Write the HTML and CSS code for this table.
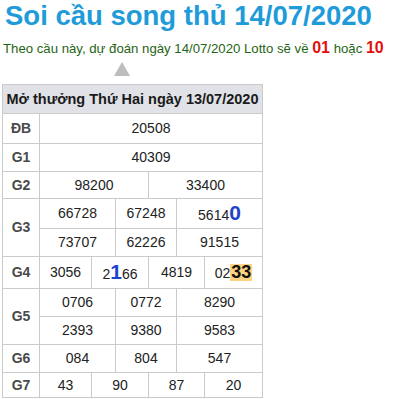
FILE: index.html
```html
<!DOCTYPE html>
<html lang="vi">
<head>
<meta charset="utf-8">
<title>Soi cầu song thủ 14/07/2020</title>
<link rel="stylesheet" href="styles.css">
</head>
<body>
<div class="page">
  <h1 class="title">Soi cầu song thủ 14/07/2020</h1>
  <p class="lead">Theo cầu này, dự đoán ngày 14/07/2020 Lotto sẽ về <b class="hit">01</b> hoặc <b class="hit">10</b></p>
  <div class="arrow"></div>
  <div class="board">
    <div class="head">Mở thưởng Thứ Hai ngày 13/07/2020</div>

    <div class="lbl">ĐB</div>
    <div class="cell c-all">20508</div>

    <div class="lbl">G1</div>
    <div class="cell c-all">40309</div>

    <div class="lbl">G2</div>
    <div class="cell c2-4">98200</div>
    <div class="cell c5-7">33400</div>

    <div class="lbl tall">G3</div>
    <div class="cell c2-3">66728</div>
    <div class="cell c4-5">67248</div>
    <div class="cell c6-7"><span>5614<b class="mark">0</b></span></div>
    <div class="cell c2-3">73707</div>
    <div class="cell c4-5">62226</div>
    <div class="cell c6-7">91515</div>

    <div class="lbl">G4</div>
    <div class="cell c2">3056</div>
    <div class="cell c3-4"><span>2<b class="mark">1</b>66</span></div>
    <div class="cell c5-6">4819</div>
    <div class="cell c7"><span>02<b class="hl">33</b></span></div>

    <div class="lbl tall">G5</div>
    <div class="cell c2-3">0706</div>
    <div class="cell c4-5">0772</div>
    <div class="cell c6-7">8290</div>
    <div class="cell c2-3">2393</div>
    <div class="cell c4-5">9380</div>
    <div class="cell c6-7">9583</div>

    <div class="lbl">G6</div>
    <div class="cell c2-3">084</div>
    <div class="cell c4-5">804</div>
    <div class="cell c6-7">547</div>

    <div class="lbl">G7</div>
    <div class="cell c2">43</div>
    <div class="cell c3-4">90</div>
    <div class="cell c5-6">87</div>
    <div class="cell c7">20</div>
  </div>
</div>
</body>
</html>
```
FILE: styles.css
```css
body {
  margin: 0;
  background: #fff;
  font-family: "Liberation Sans", Arial, sans-serif;
}

.page {
  padding: 0 2px;
}

.title {
  margin: 0;
  padding-left: 3px;
  font-size: 27.5px;
  line-height: 31px;
  font-weight: bold;
  color: #1e9bd8;
}

.lead {
  margin: 9px 0 0;
  padding-left: 1px;
  font-size: 13.2px;
  line-height: 18px;
  color: #1f6414;
}

.hit {
  color: #e30f0f;
  font-size: 16px;
  line-height: 1;
}

.arrow {
  width: 0;
  height: 0;
  margin: 4px 0 0 112px;
  border-left: 8px solid transparent;
  border-right: 8px solid transparent;
  border-bottom: 14px solid #bdbdbd;
}

.board {
  margin-top: 8px;
  display: grid;
  width: max-content;
  grid-template-columns: 36px 51px 23px 32px 27px 27px 57px;
  grid-template-rows: 28px 29px 27px 26px 29px 27px 31px 27px 27px 27px 24px;
  gap: 1px;
  padding: 1px;
  background: #cbcbcb;
  font-size: 14px;
  line-height: 17px;
}

.head {
  grid-column: 1 / -1;
  display: flex;
  align-items: center;
  justify-content: center;
  background: #e0e2e7;
  font-size: 14.5px;
  font-weight: bold;
  color: #1a1a1a;
}

.lbl {
  grid-column: 1;
  display: flex;
  align-items: center;
  justify-content: center;
  background: #fff;
  font-weight: bold;
  color: #4a4a4a;
}

.lbl.tall {
  grid-row: span 2;
}

.cell {
  display: flex;
  align-items: center;
  justify-content: center;
  background: #fff;
  color: #222;
}

.c-all { grid-column: 2 / -1; }
.c2 { grid-column: 2; }
.c7 { grid-column: 7; }
.c2-3 { grid-column: 2 / 4; }
.c2-4 { grid-column: 2 / 5; }
.c3-4 { grid-column: 3 / 5; }
.c4-5 { grid-column: 4 / 6; }
.c5-6 { grid-column: 5 / 7; }
.c5-7 { grid-column: 5 / 8; }
.c6-7 { grid-column: 6 / 8; }

.mark {
  color: #1f44cc;
  font-size: 21px;
  font-weight: bold;
}

.hl {
  display: inline-block;
  padding: 0 1px;
  background: #fdd381;
  font-size: 18px;
  line-height: 17px;
  font-weight: bold;
  color: #111;
}
```
